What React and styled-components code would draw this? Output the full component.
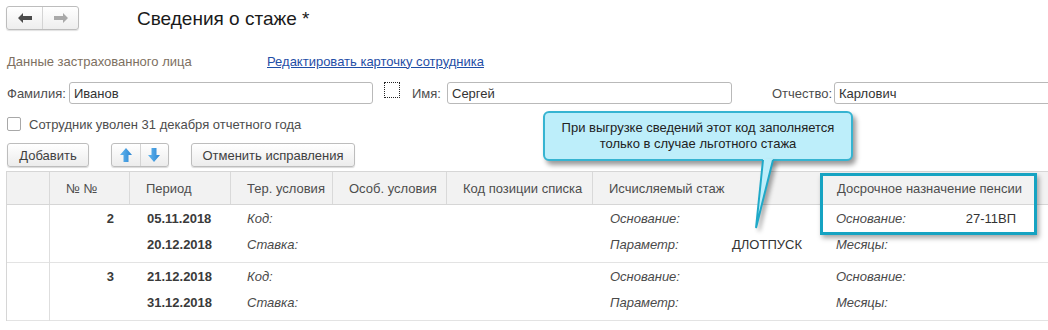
import React from 'react'
import styled, { createGlobalStyle } from 'styled-components'

const Global = createGlobalStyle`
    html, body {
        margin: 0;
        padding: 0;
        background: #fff;
    }
    body {
        font-family: "Liberation Sans", Arial, sans-serif;
        font-size: 13px;
        color: #4a4a4a;
    }
`;

const Page = styled.div`
    position: relative;
    width: 1048px;
    height: 330px;
    overflow: hidden;
    background: #fff;
`;

const TopBar = styled.div`
    height: 36px;
    padding-left: 6px;
    display: flex;
    align-items: center;
`;

const NavGroup = styled.div`
    display: flex;
    width: 73px;
    height: 24px;
    box-sizing: border-box;
    border: 1px solid #bdbdbd;
    border-radius: 3px;
    background: linear-gradient(#ffffff, #eeeeee);
    box-shadow: 0 1px 1px rgba(0, 0, 0, 0.12);
`;

const NavButton = styled.div`
    flex: 1;
    display: flex;
    align-items: center;
    justify-content: center;
    border-left: ${p => (p.$divided ? '1px solid #d4d4d4' : 'none')};
`;

const Title = styled.h1`
    margin: 2px 0 0 58px;
    font-size: 19px;
    font-weight: normal;
    color: #1a1a1a;
`;

const SectionRow = styled.div`
    margin-top: 14px;
    height: 22px;
    padding-left: 7px;
    display: flex;
    align-items: center;
`;

const SectionTitle = styled.span`
    width: 260px;
    color: #7d7061;
`;

const Link = styled.a`
    color: #1f4ea6;
    text-decoration: underline;
    cursor: pointer;
`;

const FieldsRow = styled.div`
    margin-top: 10px;
    height: 22px;
    padding-left: 7px;
    display: flex;
    align-items: center;
`;

const FieldLabel = styled.span`
    width: ${p => p.$width}px;
    margin-left: ${p => p.$offset || 0}px;
    flex-shrink: 0;
    color: #4d4d4d;
`;

const Input = styled.div`
    width: ${p => p.$width}px;
    height: 22px;
    flex-shrink: 0;
    box-sizing: border-box;
    border: 1px solid #b9b9b9;
    border-radius: 3px;
    padding: 0 4px;
    display: flex;
    align-items: center;
    color: #333;
    background: #fff;
`;

const DottedBox = styled.div`
    width: 16px;
    height: 16px;
    margin-left: 11px;
    align-self: flex-start;
    flex-shrink: 0;
    box-sizing: border-box;
    border: 1px dotted #222;
`;

const CheckRow = styled.div`
    margin-top: 10px;
    height: 20px;
    padding-left: 7px;
    display: flex;
    align-items: center;
    gap: 8px;
    color: #4d4d4d;
`;

const CheckBox = styled.div`
    width: 14px;
    height: 14px;
    box-sizing: border-box;
    border: 1px solid #a8a8a8;
    border-radius: 2px;
    background: #fff;
`;

const ButtonRow = styled.div`
    margin-top: 9px;
    height: 24px;
    padding-left: 7px;
    display: flex;
    align-items: center;
`;

const Button = styled.div`
    width: ${p => p.$width}px;
    height: 24px;
    margin-left: ${p => p.$offset || 0}px;
    box-sizing: border-box;
    border: 1px solid #bdbdbd;
    border-radius: 3px;
    background: linear-gradient(#ffffff, #ececec);
    box-shadow: 0 1px 1px rgba(0, 0, 0, 0.15);
    display: flex;
    align-items: center;
    justify-content: center;
    color: #3f3f3f;
`;

const ArrowGroup = styled(Button)`
    justify-content: stretch;
`;

const ArrowCell = styled.div`
    flex: 1;
    height: 100%;
    display: flex;
    align-items: center;
    justify-content: center;
    border-left: ${p => (p.$divided ? '1px solid #d4d4d4' : 'none')};
`;

const Table = styled.div`
    position: relative;
    margin: 4px 0 0 6px;
    width: 1100px;
    border-left: 1px solid #d6d6d6;
    border-top: 1px solid #d6d6d6;
`;

const cols = '43px 80px 101px 102px 114px 146px 228px 228px';

const HeaderRow = styled.div`
    display: grid;
    grid-template-columns: ${cols};
    height: 32px;
    background: #f2f2f2;
    border-bottom: 1px solid #d6d6d6;
`;

const HeadCell = styled.div`
    display: flex;
    align-items: center;
    padding-left: 16px;
    border-right: ${p => (p.$plain ? 'none' : '1px solid #d9d9d9')};
    color: #4d4d4d;
    white-space: nowrap;
`;

const BodyRow = styled.div`
    display: grid;
    grid-template-columns: ${cols};
    padding-bottom: 5px;
    border-bottom: 1px solid #e3e3e3;
`;

const BodyCell = styled.div`
    display: flex;
    flex-direction: column;
    border-right: ${p => (p.$lined ? '1px solid #dedede' : 'none')};
    margin-bottom: ${p => (p.$lined ? '-6px' : '0')};
`;

const Line = styled.div`
    height: 26px;
    display: flex;
    align-items: center;
    justify-content: ${p => (p.$right ? 'flex-end' : 'flex-start')};
    padding: 0 16px 0 ${p => p.$pad ?? 16}px;
    font-weight: ${p => (p.$bold ? 'bold' : 'normal')};
    color: #3a3a3a;
    white-space: nowrap;
`;

const Hint = styled.span`
    font-style: italic;
    color: #4a4a4a;
    width: ${p => (p.$width ? `${p.$width}px` : 'auto')};
    flex-shrink: 0;
`;

const Value = styled.span`
    color: #333;
    margin-left: ${p => (p.$auto ? 'auto' : '0')};
    margin-right: ${p => p.$gap || 0}px;
`;

const Highlight = styled.div`
    position: absolute;
    left: 813px;
    top: 1px;
    width: 217px;
    height: 62px;
    box-sizing: border-box;
    border: 3px solid #16a3c2;
    box-shadow: 2px 3px 5px rgba(0, 0, 0, 0.35);
    pointer-events: none;
`;

const Callout = styled.div`
    position: absolute;
    left: 543px;
    top: 111px;
    width: 310px;
    height: 50px;
    box-sizing: border-box;
    border: 2px solid #36b4d1;
    border-radius: 6px;
    background: #bdeefa;
    box-shadow: 3px 4px 5px rgba(0, 0, 0, 0.4);
    display: flex;
    flex-direction: column;
    align-items: center;
    justify-content: center;
    line-height: 16px;
    color: #222;
    text-align: center;
`;

const Tail = styled.svg`
    position: absolute;
    left: 750px;
    top: 157px;
    overflow: visible;
    filter: drop-shadow(3px 3px 2px rgba(0, 0, 0, 0.35));
`;

const NavArrow = ({ dir, color }) => (
    <svg width="14" height="10" viewBox="0 0 14 10">
        <polygon
            points={dir === 'left'
                ? '0,5 5,0 5,3 14,3 14,7 5,7 5,10'
                : '14,5 9,0 9,3 0,3 0,7 9,7 9,10'}
            fill={color}
        />
    </svg>
);

const BlueArrow = ({ dir }) => (
    <svg width="12" height="14" viewBox="0 0 12 14">
        <defs>
            <linearGradient id={`g-${dir}`} x1="0" y1="0" x2="1" y2="0">
                <stop offset="0" stopColor="#63b6ee" />
                <stop offset="1" stopColor="#2b86d3" />
            </linearGradient>
        </defs>
        <polygon
            points={dir === 'up'
                ? '6,0 12,7 8.5,7 8.5,14 3.5,14 3.5,7 0,7'
                : '6,14 12,7 8.5,7 8.5,0 3.5,0 3.5,7 0,7'}
            fill={`url(#g-${dir})`}
        />
    </svg>
);

const rows = [
    { no: '2', from: '05.11.2018', to: '20.12.2018', param: 'ДЛОТПУСК', basis: '27-11ВП' },
    { no: '3', from: '21.12.2018', to: '31.12.2018', param: '', basis: '' },
];

const headers = [
    '', '№ №', 'Период', 'Тер. условия', 'Особ. условия',
    'Код позиции списка', 'Исчисляемый стаж', 'Досрочное назначение пенсии',
];

const App = () => {
    return (
        <Page>
            <Global />
            <TopBar>
                <NavGroup>
                    <NavButton><NavArrow dir="left" color="#4b4b4b" /></NavButton>
                    <NavButton $divided><NavArrow dir="right" color="#a9a9a9" /></NavButton>
                </NavGroup>
                <Title>Сведения о стаже *</Title>
            </TopBar>

            <SectionRow>
                <SectionTitle>Данные застрахованного лица</SectionTitle>
                <Link>Редактировать карточку сотрудника</Link>
            </SectionRow>

            <FieldsRow>
                <FieldLabel $width={62}>Фамилия:</FieldLabel>
                <Input $width={304}>Иванов</Input>
                <DottedBox />
                <FieldLabel $width={35} $offset={12}>Имя:</FieldLabel>
                <Input $width={285}>Сергей</Input>
                <FieldLabel $width={62} $offset={40}>Отчество:</FieldLabel>
                <Input $width={240}>Карлович</Input>
            </FieldsRow>

            <CheckRow>
                <CheckBox />
                <span>Сотрудник уволен 31 декабря отчетного года</span>
            </CheckRow>

            <ButtonRow>
                <Button $width={82}>Добавить</Button>
                <ArrowGroup $width={58} $offset={22}>
                    <ArrowCell><BlueArrow dir="up" /></ArrowCell>
                    <ArrowCell $divided><BlueArrow dir="down" /></ArrowCell>
                </ArrowGroup>
                <Button $width={164} $offset={22}>Отменить исправления</Button>
            </ButtonRow>

            <Table>
                <HeaderRow>
                    {headers.map((h, i) => (
                        <HeadCell key={i} $plain={i >= 6}>{h}</HeadCell>
                    ))}
                </HeaderRow>

                {rows.map(r => (
                    <BodyRow key={r.no}>
                        <BodyCell $lined />
                        <BodyCell>
                            <Line $right $bold>{r.no}</Line>
                        </BodyCell>
                        <BodyCell>
                            <Line $bold $pad={17}>{r.from}</Line>
                            <Line $bold $pad={17}>{r.to}</Line>
                        </BodyCell>
                        <BodyCell>
                            <Line><Hint>Код:</Hint></Line>
                            <Line><Hint>Ставка:</Hint></Line>
                        </BodyCell>
                        <BodyCell />
                        <BodyCell />
                        <BodyCell>
                            <Line $pad={17}><Hint>Основание:</Hint></Line>
                            <Line $pad={17}>
                                <Hint $width={122}>Параметр:</Hint>
                                <Value>{r.param}</Value>
                            </Line>
                        </BodyCell>
                        <BodyCell>
                            <Line $pad={15}>
                                <Hint>Основание:</Hint>
                                <Value $auto $gap={17}>{r.basis}</Value>
                            </Line>
                            <Line $pad={15}><Hint>Месяцы:</Hint></Line>
                        </BodyCell>
                    </BodyRow>
                ))}

                <Highlight />
            </Table>

            <Callout>
                <span>При выгрузке сведений этот код заполняется</span>
                <span>только в случае льготного стажа</span>
            </Callout>
            <Tail width="26" height="72" viewBox="0 0 26 72">
                <polygon points="13,2 23,2 6,71" fill="#bdeefa" />
                <polyline points="13,3 6,71 23,3" fill="none" stroke="#1fa9c8" strokeWidth="2" />
            </Tail>
        </Page>
    )
}

export default App
